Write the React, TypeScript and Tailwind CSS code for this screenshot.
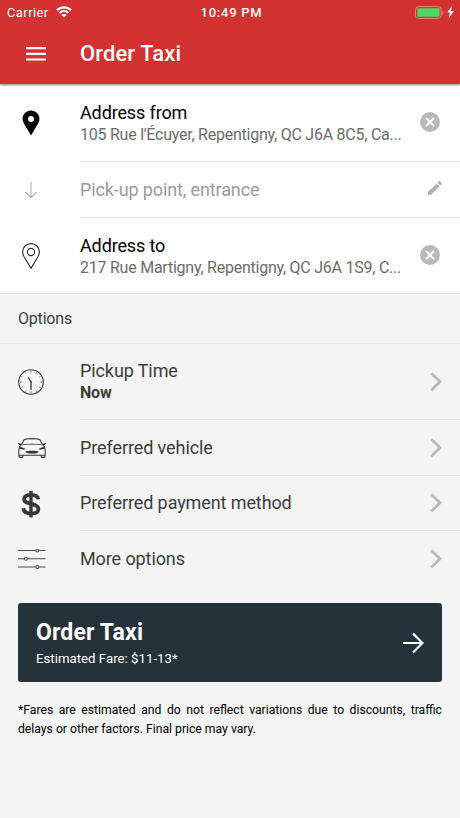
import type { ReactNode } from 'react'


const PIN_PATH = 'M9 .6C4.3.6.6 4.3.6 8.8c0 2 .7 3.5 1.6 5.2L9 25.4 15.8 14c.9-1.7 1.6-3.2 1.6-5.2C17.4 4.3 13.7.6 9 .6z'

function PinFilledIcon() {
    return (
        <svg className="mt-px" width="18" height="26" viewBox="0 0 18 26" fill="#000000">
            <path d={PIN_PATH} />
            <circle cx="9" cy="9" r="3" fill="#ffffff" />
        </svg>
    )
}

function PinOutlineIcon() {
    return (
        <svg width="18" height="26" viewBox="0 0 18 26" fill="none" stroke="#262626" strokeWidth="1.1">
            <path d={PIN_PATH} strokeLinejoin="round" />
            <circle cx="9" cy="9" r="3.6" />
        </svg>
    )
}

function ArrowDownIcon() {
    return (
        <svg width="14" height="18" viewBox="0 0 14 18" fill="none" stroke="#b0b0b0" strokeWidth="1.1">
            <path d="M7 1v15.5M1.4 11.2 7 16.5l5.6-5.3" />
        </svg>
    )
}

function ClockIcon() {
    return (
        <svg width="26" height="26" viewBox="0 0 26 26" fill="none" stroke="#333333">
            <circle cx="13" cy="13" r="12.3" strokeWidth="1.1" />
            <path
                d="M13 2v1.6M13 22.4V24M2 13h1.6M22.4 13H24M7.5 3.5l.6 1.1M17.9 21.4l.6 1.1M3.5 7.5l1.1.6M21.4 17.9l1.1.6M3.5 18.5l1.1-.6M21.4 8.1l1.1-.6M7.5 22.5l.6-1.1M17.9 4.6l.6-1.1"
                strokeWidth="0.7"
            />
            <path d="M10.3 8.6 13 13v7.7" strokeWidth="1.3" />
            <circle cx="13" cy="13" r="0.8" fill="#333333" stroke="none" />
        </svg>
    )
}

function CarIcon() {
    return (
        <svg className="ml-px" width="28" height="20" viewBox="0 0 28 20" fill="none" stroke="#333333" strokeWidth="1.1" strokeLinejoin="round">
            <path d="M3.4 6.600 6 2C6.800.7 8.400.6 14 .6s7.200.1 8 1.400l2.600 4.600" />
            <path d="M4.400 6.800c3-.7 16.200-.7 19.200 0" strokeWidth="0.8" />
            <path d="M3.500 6.600C1.600 8 .8 9.800.8 12v4.700c0 .4.200.6.600.6h25.200c.4 0 .6-.2.6-.6V12c0-2.200-.8-4-2.700-5.400" />
            <path d="M0 5.300c1.400-.1 2.700.2 3.600 1.100L2.700 7.600C1.400 7.300.4 6.600 0 5.300zM28 5.300c-1.400-.1-2.700.2-3.600 1.100l.9 1.200c1.300-.3 2.300-1 2.700-2.300z" fill="#333333" stroke="none" />
            <path d="M1 17.300v1.500c0 .4.200.6.600.6h2.600c.4 0 .6-.2.6-.6v-1.500M23.200 17.300v1.500c0 .4.200.6.600.6h2.600c.4 0 .6-.2.6-.6v-1.500" />
            <path d="M1.700 9c2.300.1 4.700.9 6 2.400-2.200.4-4.700.1-5.900-.8zM26.300 9c-2.300.1-4.700.9-6 2.400 2.200.4 4.700.1 5.900-.8z" fill="#333333" stroke="none" />
            <path d="M7.300 13.600c2.200-1.300 11.200-1.300 13.400 0-.9 1.700-2.500 2-6.700 2s-5.800-.3-6.700-2z" fill="#333333" stroke="none" />
        </svg>
    )
}

function DollarIcon() {
    return (
        <svg width="20" height="28" viewBox="0 0 20 28" fill="none" stroke="#383838">
            <path d="M17.300 9.200C17 6.300 14.200 4.800 10 4.800c-4 0-6.900 1.400-6.900 4.300 0 3.300 3.200 4 7 4.800s7.300 1.700 7.300 5c0 3-3 4.600-7.200 4.600-4.600 0-7.500-2-7.900-5.300" strokeWidth="3.700" />
            <path d="M10 .8v26.600" strokeWidth="3.400" />
        </svg>
    )
}

function SlidersIcon() {
    return (
        <svg className="-mt-px ml-px" width="28" height="20" viewBox="0 0 28 20" fill="none" stroke="#4a4a4a" strokeWidth="1.1">
            <path d="M0 1.500h17.400M21.200 1.500h6.300M0 9.700h6M9.800 9.700h17.700M0 18h17.400M21.200 18h6.300" />
            <circle cx="19.300" cy="1.500" r="1.500" />
            <circle cx="7.900" cy="9.700" r="1.500" />
            <circle cx="19.300" cy="18" r="1.500" />
        </svg>
    )
}

function ClearIcon() {
    return (
        <svg width="20" height="20" viewBox="0 0 20 20">
            <circle cx="10" cy="10" r="10" fill="#b9b9b9" />
            <path d="m6 6 8 8M14 6l-8 8" stroke="#ffffff" strokeWidth="2" />
        </svg>
    )
}

function PencilIcon() {
    return (
        <svg width="14" height="14" viewBox="3 3 18 18" fill="#b0b0b0">
            <path d="M3 17.250V21h3.750L17.810 9.940l-3.750-3.750L3 17.250zM20.710 7.040a1 1 0 0 0 0-1.410l-2.340-2.340a1 1 0 0 0-1.410 0l-1.830 1.830 3.750 3.750 1.830-1.830z" />
        </svg>
    )
}

function ChevronIcon() {
    return (
        <svg width="12" height="20" viewBox="0 0 12 20" fill="none" stroke="#b9b9b9" strokeWidth="2.8">
            <path d="m1.200 1.200 8.800 8.600-8.800 8.600" />
        </svg>
    )
}

function StatusBar() {
    return (
        <div className="grid h-6 grid-cols-3 items-center pl-[7px] pr-[6px] text-[13px] leading-none">
            <div className="flex items-center gap-[7px]">
                <span className="tracking-[0.4px]">Carrier</span>
                <svg width="16" height="12" viewBox="0 0 16 12" fill="none" stroke="#ffffff" strokeWidth="2.1">
                    <path d="M1 4.300c4-3.900 10-3.900 14 0M3.500 6.900c2.600-2.500 6.400-2.500 9 0" />
                    <path d="M5.300 8.900c1.600-1.500 3.800-1.500 5.400 0L8 11.600z" fill="#ffffff" stroke="none" />
                </svg>
            </div>
            <span className="pl-[2px] text-center font-medium tracking-[0.75px]">10:49 PM</span>
            <div className="flex items-center justify-end gap-[3px]">
                <svg width="29" height="13" viewBox="0 0 29 13">
                    <rect x=".6" y=".6" width="25.500" height="11.800" rx="2.800" fill="none" stroke="#ee8a68" strokeWidth="1" />
                    <rect x="2.300" y="2.300" width="22.200" height="8.400" rx="1" fill="#4cd964" />
                    <path d="M27.300 4.500c1.700.6 1.700 3.400 0 4z" fill="#e98080" />
                </svg>
                <svg width="7" height="12" viewBox="0 0 7 12" fill="#ffffff">
                    <path d="M4.900 0 .2 6.600h2.700L1.800 12l5-7.100H4z" />
                </svg>
            </div>
        </div>
    )
}

function AddressRow({ icon, title, address }: { icon: ReactNode; title: string; address: string }) {
    return (
        <div className="flex h-full">
            <div className="flex w-[62px] shrink-0 items-center justify-center">{icon}</div>
            <div className="ml-[18px] flex min-w-0 flex-1 items-center">
                <div className="pt-[2px]">
                    <p className="text-[18px] leading-[22px] tracking-[-0.13px] text-black">{title}</p>
                    <p className="whitespace-nowrap text-[16px] leading-[22px] tracking-[-0.24px] text-[#6b6b6b]">{address}</p>
                </div>
                <div className="ml-auto mr-5 pb-px">
                    <ClearIcon />
                </div>
            </div>
        </div>
    )
}

function OptionRow({ icon, label, value, last }: { icon: ReactNode; label: string; value?: string; last?: boolean }) {
    return (
        <div className="flex h-full">
            <div className="flex w-[62px] shrink-0 items-center justify-center">{icon}</div>
            <div className={`ml-[18px] flex flex-1 items-center justify-between pr-[18px] ${last ? '' : 'border-b border-[#e1e1e1]'}`}>
                <div>
                    <p className="text-[18px] leading-[22px] tracking-[-0.1px]">{label}</p>
                    {value && <p className="text-[16px] font-bold leading-[22px] tracking-[-0.2px]">{value}</p>}
                </div>
                <ChevronIcon />
            </div>
        </div>
    )
}

export default function App() {
    return (
        <div className="min-h-screen w-[460px] bg-[#f4f4f4] font-['Roboto',sans-serif] text-[#3c3c3c]">
            <header className="relative h-[84px] bg-[#d43131] text-white shadow-[0_1px_2px_rgba(0,0,0,0.5)]">
                <StatusBar />
                <div className="flex h-[60px] items-center pl-[26px]">
                    <svg width="20" height="14" viewBox="0 0 20 14" fill="#ffffff">
                        <path d="M0 0h20v2.200H0zM0 5.700h20v2.200H0zM0 11.400h20v2.200H0z" />
                    </svg>
                    <h1 className="ml-[34px] text-[22px] font-medium leading-none tracking-[0.1px]">Order Taxi</h1>
                </div>
            </header>

            <section className="bg-white">
                <div className="h-[77px]">
                    <AddressRow
                        icon={<PinFilledIcon />}
                        title="Address from"
                        address="105 Rue l'Écuyer, Repentigny, QC J6A 8C5, Ca..."
                    />
                </div>
                <div className="flex h-[57px]">
                    <div className="flex w-[62px] items-center justify-center pt-px">
                        <ArrowDownIcon />
                    </div>
                    <div className="ml-[18px] flex flex-1 items-center justify-between border-y border-[#dedede] pr-[18px]">
                        <span className="text-[18px] tracking-[-0.12px] text-[#9b9b9b]">Pick-up point, entrance</span>
                        <div className="pb-[3px]">
                            <PencilIcon />
                        </div>
                    </div>
                </div>
                <div className="h-[75px]">
                    <AddressRow
                        icon={<PinOutlineIcon />}
                        title="Address to"
                        address="217 Rue Martigny, Repentigny, QC J6A 1S9, C..."
                    />
                </div>
            </section>

            <h2 className="flex h-[51px] items-center border-y border-[#e1e1e1] pl-[18px] text-[16px] tracking-[-0.2px]">
                Options
            </h2>

            <section>
                <div className="h-[76px]">
                    <OptionRow icon={<ClockIcon />} label="Pickup Time" value="Now" />
                </div>
                <div className="h-[56px]">
                    <OptionRow icon={<CarIcon />} label="Preferred vehicle" />
                </div>
                <div className="h-[55px]">
                    <OptionRow icon={<DollarIcon />} label="Preferred payment method" />
                </div>
                <div className="h-[56px]">
                    <OptionRow icon={<SlidersIcon />} label="More options" last />
                </div>
            </section>

            <button className="mx-[18px] mt-4 flex h-[79px] w-[424px] items-center justify-between rounded-[3px] bg-[#263239] px-[18px] text-left text-white">
                <span className="pt-[3px]">
                    <span className="block text-[23px] font-bold leading-7 tracking-[0.15px]">Order Taxi</span>
                    <span className="mt-[2px] block text-[13.25px] leading-5">Estimated Fare: $11-13*</span>
                </span>
                <svg width="21" height="22" viewBox="0 0 21 22" fill="none" stroke="#ffffff" strokeWidth="2.2">
                    <path d="M0 11h19.500M10 1.500l9.500 9.500-9.500 9.500" />
                </svg>
            </button>

            <p className="mx-[18px] mt-[19px] text-justify text-[12.2px] leading-[19px] text-black">
                *Fares are estimated and do not reflect variations due to discounts, traffic delays or other factors. Final price may vary.
            </p>
        </div>
    )
}
